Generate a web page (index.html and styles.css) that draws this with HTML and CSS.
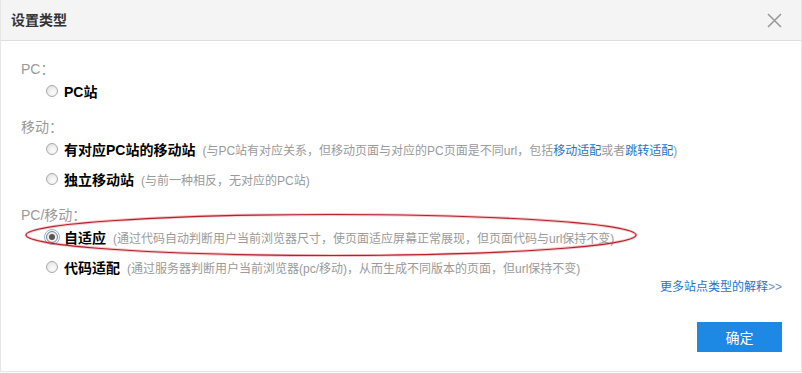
FILE: index.html
```html
<!DOCTYPE html>
<html lang="zh-CN">
<head>
<meta charset="utf-8">
<title>设置类型</title>
<link rel="stylesheet" href="styles.css">
</head>
<body>
<div class="dialog">
  <div class="dialog-header">
    <span class="dialog-title">设置类型</span>
    <svg class="close" width="15" height="15" viewBox="0 0 15 15"><path d="M1 1 L14 14 M14 1 L1 14" stroke="#9a9a9a" stroke-width="1.6" fill="none"/></svg>
  </div>
  <div class="dialog-body">
    <div class="group">
      <div class="group-label">PC：</div>
      <div class="option"><span class="radio"></span><span class="opt-name">PC站</span></div>
    </div>
    <div class="group">
      <div class="group-label">移动：</div>
      <div class="option"><span class="radio"></span><span class="opt-name">有对应PC站的移动站</span><span class="opt-desc">(与PC站有对应关系，但移动页面与对应的PC页面是不同url，包括<a class="link">移动适配</a>或者<a class="link">跳转适配</a>)</span></div>
      <div class="option"><span class="radio"></span><span class="opt-name">独立移动站</span><span class="opt-desc">(与前一种相反，无对应的PC站)</span></div>
    </div>
    <div class="group">
      <div class="group-label">PC/移动：</div>
      <div class="option"><span class="radio checked"></span><span class="opt-name">自适应</span><span class="opt-desc">(通过代码自动判断用户当前浏览器尺寸，使页面适应屏幕正常展现，但页面代码与url保持不变)</span></div>
      <div class="option"><span class="radio"></span><span class="opt-name">代码适配</span><span class="opt-desc">(通过服务器判断用户当前浏览器(pc/移动)，从而生成不同版本的页面，但url保持不变)</span></div>
    </div>
    <div class="more"><a class="link">更多站点类型的解释<span class="arrows">&gt;&gt;</span></a></div>
    <div class="footer"><button class="btn-ok">确定</button></div>
    <svg class="mark" width="620" height="50" viewBox="0 0 620 50">
      <ellipse cx="310" cy="22" rx="305" ry="20.5" fill="none" stroke="rgba(225,90,100,0.35)" stroke-width="3"/>
      <ellipse cx="310" cy="22" rx="305" ry="20.5" fill="none" stroke="#b3232c" stroke-width="1.2"/>
    </svg>
  </div>
</div>
</body>
</html>
```
FILE: styles.css
```css
html, body {
  margin: 0;
  padding: 0;
  background: #fff;
}
body {
  font-family: "Liberation Sans", "Noto Sans CJK SC", sans-serif;
  font-size: 14px;
  color: #333;
}
.dialog {
  width: 802px;
  height: 372px;
  box-sizing: border-box;
  border: 1px solid #e6e6e6;
  border-top: none;
  display: flex;
  flex-direction: column;
}
.dialog-header {
  height: 40px;
  background: #f4f4f4;
  border-bottom: 1px solid #dedede;
  display: flex;
  align-items: center;
  justify-content: space-between;
  padding: 0 19px 0 10px;
}
.dialog-title {
  font-weight: bold;
  font-size: 14px;
  color: #333;
  line-height: 20px;
}
.close {
  display: block;
  margin-top: 1px;
}
.dialog-body {
  position: relative;
  flex: 1;
  padding: 21px 19px 0 20px;
}
.group + .group {
  margin-top: 14px;
}
.group-label {
  color: #9a9a9a;
  font-size: 14px;
  line-height: 14px;
}
.option {
  display: flex;
  align-items: center;
  height: 30px;
  padding-left: 25px;
  white-space: nowrap;
}
.radio {
  width: 10px;
  height: 10px;
  border: 1px solid #a9a9a9;
  border-radius: 50%;
  background: radial-gradient(circle at 60% 65%, #fdfdfd 0, #ececec 55%, #d8d8d8 100%);
  margin-right: 6px;
  position: relative;
  flex: none;
}
.radio.checked {
  outline: 1px solid #8eb4e6;
  outline-offset: 1px;
  border-color: #7f7f7f;
}
.radio.checked::after {
  content: "";
  position: absolute;
  left: 2px;
  top: 2px;
  width: 6px;
  height: 6px;
  border-radius: 50%;
  background: #555;
}
.opt-name {
  font-weight: bold;
  color: #000;
  font-size: 14px;
}
.opt-desc {
  color: #9a9a9a;
  font-size: 12px;
  margin-left: 7px;
}
.link {
  color: #2474c6;
  text-decoration: none;
  cursor: pointer;
}
.arrows {
  color: #6d8fc8;
}
.more {
  text-align: right;
  font-size: 12px;
  line-height: 14px;
  margin-top: -2px;
}
.footer {
  display: flex;
  justify-content: flex-end;
  margin-top: 28px;
}
.btn-ok {
  width: 85px;
  height: 30px;
  border: none;
  background: #1e88e5;
  color: #fff;
  font-family: "Liberation Sans", "Noto Sans CJK SC", sans-serif;
  font-size: 14px;
  padding: 0;
}
.mark {
  position: absolute;
  left: 20px;
  top: 172px;
  pointer-events: none;
}
```
